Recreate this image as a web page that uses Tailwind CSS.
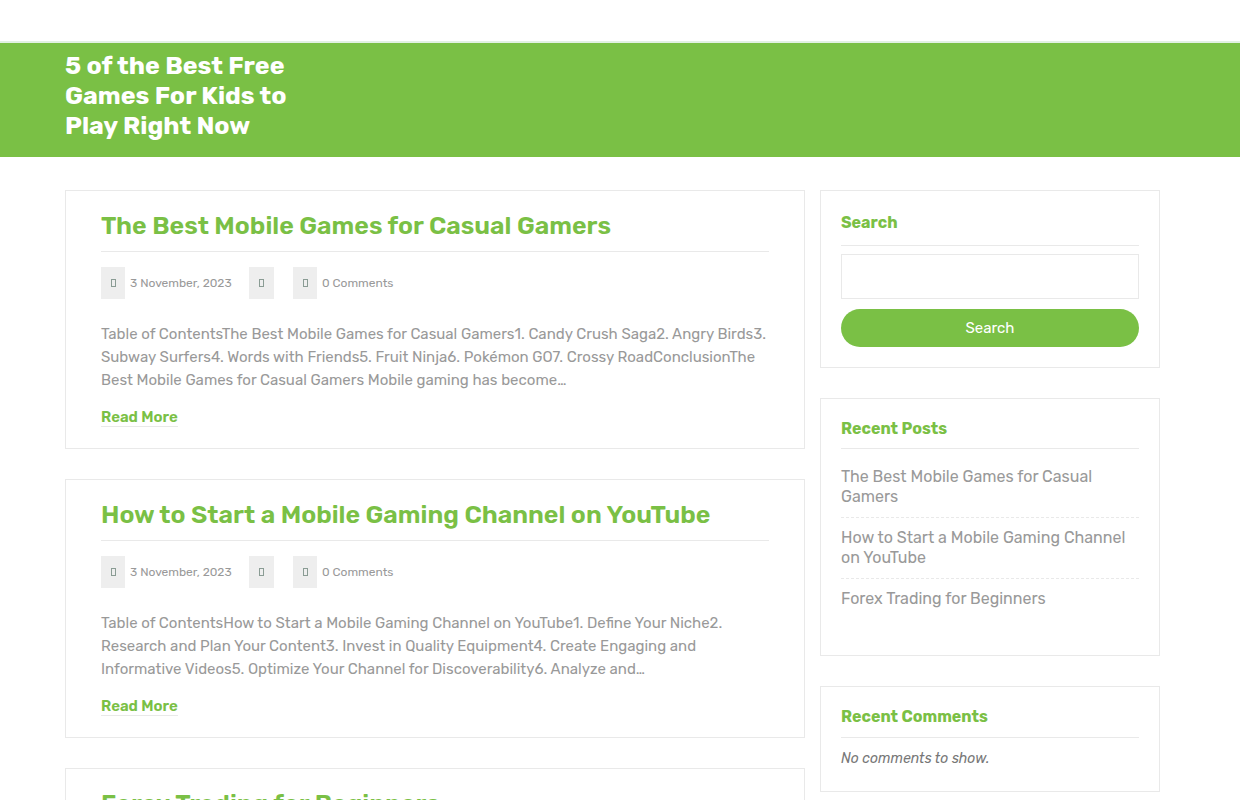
<!DOCTYPE html>
<html lang="en">
<head>
  <meta charset="UTF-8" />
  <meta name="viewport" content="width=device-width, initial-scale=1.0"/>
  <title>5 of the Best Free Games For Kids to Play Right Now</title>
  <script src="https://cdn.jsdelivr.net/npm/@tailwindcss/browser@4"></script>
</head>
<body class="bg-white font-[Rubik,Inter,sans-serif] text-[#999999]">

  <header class="mt-[41px] border-t-2 border-[#e2f1e2] bg-[#7ac045]">
    <div class="max-w-[1140px] mx-auto px-[15px] pt-2 pb-4">
      <h1 class="w-60 text-[25px] leading-[30px] font-bold text-white"><a href="#">5 of the Best Free Games For Kids to Play Right Now</a></h1>
    </div>
  </header>

  <div class="max-w-[1140px] mx-auto mt-[33px] pl-[15px] pr-[30px] flex items-start gap-[15px]">

    <main class="flex-1 min-w-0 space-y-[30px]">
      <article class="border border-[#e9e9e9] px-[35px] pt-5 pb-[21px]">
        <h2 class="border-b border-[#e9e9e9] pb-[10px] text-[25px] leading-[30px] font-semibold text-[#7ac045]"><a href="#">The Best Mobile Games for Casual Gamers</a></h2>
        <div class="mt-[15px] flex items-center text-xs">
          <span class="w-6 h-8 mr-[5px] bg-[#eeeeee] flex items-center justify-center">
            <svg class="w-[5px] h-2" viewBox="0 0 5 8" fill="none" stroke="#8a9c94"><rect x=".5" y=".5" width="4" height="7"/></svg>
          </span>
          <a href="#" class="w-[119px]">3 November, 2023</a>
          <span class="w-[25px] h-8 mr-[19px] bg-[#eeeeee] flex items-center justify-center">
            <svg class="w-[5px] h-2" viewBox="0 0 5 8" fill="none" stroke="#8a9c94"><rect x=".5" y=".5" width="4" height="7"/></svg>
          </span>
          <span class="w-6 h-8 mr-[5px] bg-[#eeeeee] flex items-center justify-center">
            <svg class="w-[5px] h-2" viewBox="0 0 5 8" fill="none" stroke="#8a9c94"><rect x=".5" y=".5" width="4" height="7"/></svg>
          </span>
          <a href="#">0 Comments</a>
        </div>
        <p class="mt-6 text-[15px] leading-[23px]">Table of ContentsThe Best Mobile Games for Casual Gamers1. Candy Crush Saga2. Angry Birds3. Subway Surfers4. Words with Friends5. Fruit Ninja6. Pokémon GO7. Crossy RoadConclusionThe Best Mobile Games for Casual Gamers Mobile gaming has become…</p>
        <div class="mt-4 flex"><a href="#" class="border-b border-[#e9e9e9] text-[15px] leading-[18px] font-semibold text-[#7ac045]">Read More</a></div>
      </article>

      <article class="border border-[#e9e9e9] px-[35px] pt-5 pb-[21px]">
        <h2 class="border-b border-[#e9e9e9] pb-[10px] text-[25px] leading-[30px] font-semibold text-[#7ac045]"><a href="#">How to Start a Mobile Gaming Channel on YouTube</a></h2>
        <div class="mt-[15px] flex items-center text-xs">
          <span class="w-6 h-8 mr-[5px] bg-[#eeeeee] flex items-center justify-center">
            <svg class="w-[5px] h-2" viewBox="0 0 5 8" fill="none" stroke="#8a9c94"><rect x=".5" y=".5" width="4" height="7"/></svg>
          </span>
          <a href="#" class="w-[119px]">3 November, 2023</a>
          <span class="w-[25px] h-8 mr-[19px] bg-[#eeeeee] flex items-center justify-center">
            <svg class="w-[5px] h-2" viewBox="0 0 5 8" fill="none" stroke="#8a9c94"><rect x=".5" y=".5" width="4" height="7"/></svg>
          </span>
          <span class="w-6 h-8 mr-[5px] bg-[#eeeeee] flex items-center justify-center">
            <svg class="w-[5px] h-2" viewBox="0 0 5 8" fill="none" stroke="#8a9c94"><rect x=".5" y=".5" width="4" height="7"/></svg>
          </span>
          <a href="#">0 Comments</a>
        </div>
        <p class="mt-6 text-[15px] leading-[23px]">Table of ContentsHow to Start a Mobile Gaming Channel on YouTube1. Define Your Niche2. Research and Plan Your Content3. Invest in Quality Equipment4. Create Engaging and Informative Videos5. Optimize Your Channel for Discoverability6. Analyze and…</p>
        <div class="mt-4 flex"><a href="#" class="border-b border-[#e9e9e9] text-[15px] leading-[18px] font-semibold text-[#7ac045]">Read More</a></div>
      </article>

      <article class="border border-[#e9e9e9] px-[35px] pt-5 pb-[21px]">
        <h2 class="border-b border-[#e9e9e9] pb-[10px] text-[25px] leading-[30px] font-semibold text-[#7ac045]"><a href="#">Forex Trading for Beginners</a></h2>
      </article>
    </main>

    <aside class="w-[340px] shrink-0 space-y-[30px]">
      <form class="border border-[#e9e9e9] p-5">
        <label for="search" class="block border-b border-[#e9e9e9] pt-[2px] pb-3 text-base leading-5 font-bold text-[#7ac045]">Search</label>
        <input id="search" type="search" class="block mt-2 w-full h-[45px] border border-[#e9e9e9] px-3">
        <button class="block mt-[10px] w-full h-[38px] rounded-full bg-[#7ac045] text-[15px] text-white">Search</button>
      </form>

      <section class="border border-[#e9e9e9] px-5 pt-5 pb-[46px]">
        <h2 class="border-b border-[#e9e9e9] pb-[9px] text-base leading-5 font-bold text-[#7ac045]">Recent Posts</h2>
        <ul class="mt-2 text-base leading-5 divide-y divide-dashed divide-[#e9e9e9]">
          <li class="py-[10px]"><a href="#">The Best Mobile Games for Casual Gamers</a></li>
          <li class="py-[10px]"><a href="#">How to Start a Mobile Gaming Channel on YouTube</a></li>
          <li class="pt-[10px]"><a href="#">Forex Trading for Beginners</a></li>
        </ul>
      </section>

      <section class="border border-[#e9e9e9] px-5 pt-5 pb-[22px]">
        <h2 class="border-b border-[#e9e9e9] pb-[10px] text-base leading-5 font-bold text-[#7ac045]">Recent Comments</h2>
        <p class="mt-[10px] text-sm leading-[21px] italic text-[#777777]">No comments to show.</p>
      </section>
    </aside>
  </div>

</body>
</html>
